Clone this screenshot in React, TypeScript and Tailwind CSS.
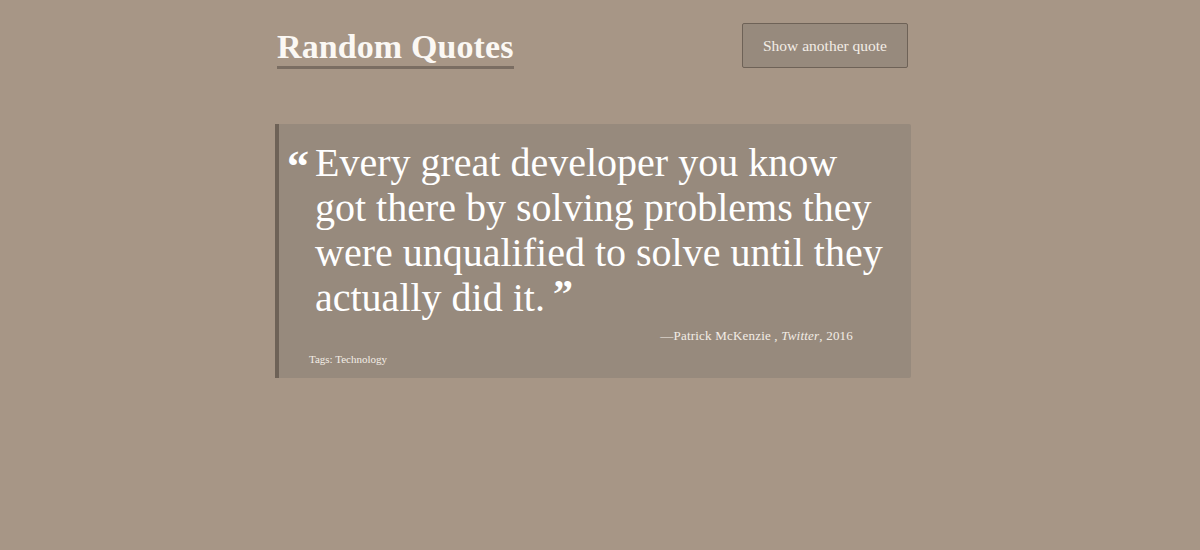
export default function App() {
  const serif = { fontFamily: '"Liberation Serif", "DejaVu Serif", serif' };

  return (
    <div className="min-h-[550px] w-full bg-[#a79686] text-white" style={serif}>
      <div className="ml-[275px] w-[636px] pt-[23px]">
        <header className="flex items-start justify-between">
          <h1 className="ml-[2px] mt-[5px] border-b-[3px] border-[#7a6d62] pb-[1px] text-[34px] font-bold leading-[37px] tracking-[0.1px] text-[#fbf8f4]">
            Random Quotes
          </h1>
          <button className="mr-[3px] h-[45px] w-[166px] rounded-[2px] border border-[#6e6257] bg-[#978a7d] text-[15.5px] text-[#f3ede6]">
            Show another quote
          </button>
        </header>

        <section className="mt-[55px] h-[254px] rounded-r-[2px] border-l-[4px] border-[#6e6257] bg-[#978a7d] pt-[16px]">
          <blockquote className="relative pl-[36px] text-[40px] leading-[45px] text-white">
            <span className="absolute left-[8px] top-[4px] text-[44px] font-bold leading-[45px]">“</span>
            Every great developer you know
            <br />
            got there by solving problems they
            <br />
            were unqualified to solve until they
            <br />
            actually did it.{' '}
            <span className="relative -top-[4px] -ml-[2px] text-[40px] font-bold">”</span>
          </blockquote>
          <p className="mt-[6px] pr-[58px] text-right text-[13px] tracking-[0.2px] text-[#f3ede6]">
            —Patrick McKenzie , <em>Twitter</em>, 2016
          </p>
          <p className="mt-[5px] pl-[30px] text-[11px] text-[#f3ede6]">Tags: Technology</p>
        </section>
      </div>
    </div>
  );
}
